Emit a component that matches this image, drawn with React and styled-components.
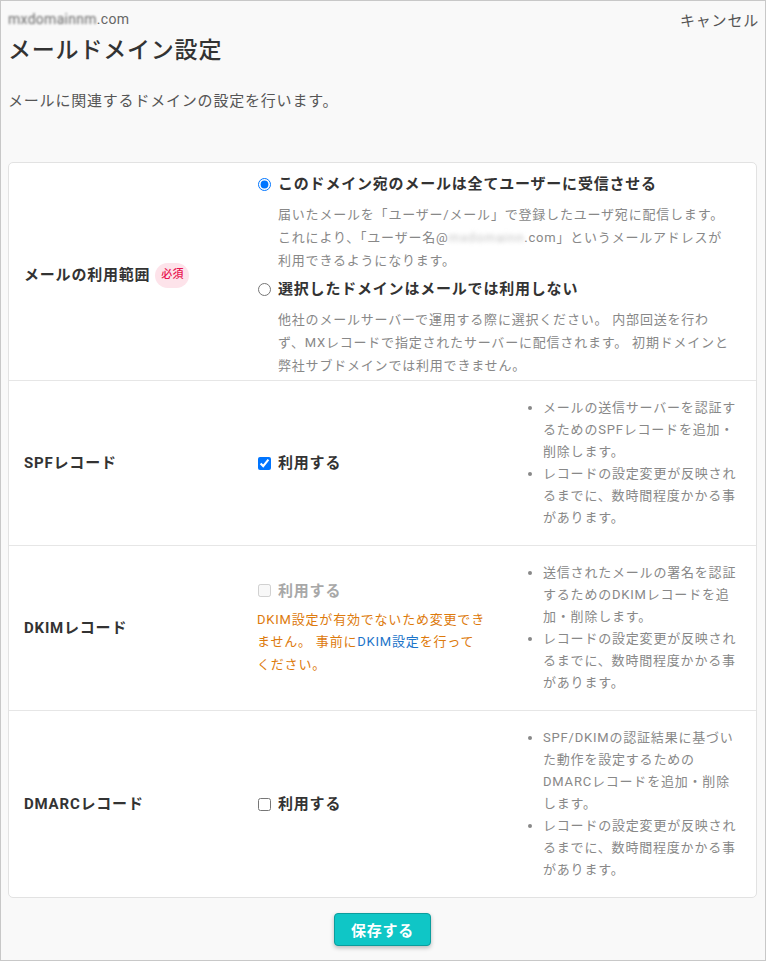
import React from "react"
import styled, { createGlobalStyle } from "styled-components"

const GlobalStyle = createGlobalStyle`
  html, body {
    margin: 0;
    padding: 0;
  }
  body {
    font-family: Roboto, "Noto Sans CJK JP", sans-serif;
    letter-spacing: 0.05em;
    color: #333;
    background: #f9f9f9;
  }
`

const Frame = styled.div`
  height: 961px;
  box-sizing: border-box;
  border: 1px solid #c8c8c8;
  background: #f9f9f9;
  padding: 0 8px 0 7px;
  display: flex;
  flex-direction: column;
  overflow: hidden;
`

const TopBar = styled.div`
  display: flex;
  justify-content: space-between;
  align-items: center;
  height: 20px;
  margin-top: 8px;
`

const Domain = styled.div`
  font-size: 14px;
  color: #666;
  letter-spacing: 0.02em;
`

const Masked = styled.span`
  filter: blur(${(p) => p.$blur || 1.3}px);
  color: ${(p) => p.$color || "#666"};
`

const Cancel = styled.button`
  all: unset;
  font-size: 15px;
  color: #555;
  margin-right: -2px;
  cursor: pointer;
`

const Title = styled.h1`
  margin: 6px 0 0;
  font-size: 23px;
  font-weight: 500;
  line-height: 32px;
  color: #333;
`

const Lead = styled.p`
  margin: 23px 0 0;
  font-size: 15px;
  line-height: 22px;
  color: #555;
`

const Card = styled.div`
  margin-top: 50px;
  background: #fff;
  border: 1px solid #e2e2e2;
  border-radius: 5px;
`

const Row = styled.div`
  display: grid;
  grid-template-columns: 203px 240px 214px;
  column-gap: 30px;
  align-items: center;
  padding: ${(p) => p.$pad || "16px 15px"};
  & + & {
    border-top: 1px solid #e6e6e6;
  }
`

const Label = styled.div`
  font-size: 15px;
  font-weight: 700;
  line-height: 22px;
  color: #333;
  display: flex;
  align-items: center;
  gap: 5px;
`

const Required = styled.span`
  display: inline-flex;
  align-items: center;
  justify-content: center;
  width: 34px;
  height: 25px;
  border-radius: 13px;
  background: #fde3ea;
  color: #e8134f;
  font-size: 11px;
  font-weight: 500;
  letter-spacing: 0.02em;
`

const Control = styled.div`
  grid-column: ${(p) => (p.$wide ? "2 / 4" : "auto")};
`

const Option = styled.div`
  & + & {
    margin-top: 6px;
  }
`

const Choice = styled.label`
  display: flex;
  align-items: center;
  font-size: 15px;
  font-weight: 700;
  line-height: 22px;
  color: ${(p) => (p.$disabled ? "#a8a8a8" : "#333")};
  input {
    margin: 0 7px 0 1px;
    width: 13px;
    height: 13px;
  }
`

const OptionNote = styled.p`
  margin: 8px 0 0;
  padding: 0 8px 0 21px;
  font-size: 13px;
  line-height: 23px;
  color: #888;
`

const Warning = styled.p`
  margin: 7px 0 0;
  padding-right: 10px;
  font-size: 13px;
  line-height: 22.5px;
  color: #dd7a0c;
  a {
    color: #1b74c9;
    text-decoration: none;
  }
`

const Hints = styled.ul`
  margin: 0;
  padding-left: 16px;
  font-size: 13px;
  line-height: 22px;
  color: #888;
  li::marker {
    color: #888;
  }
`

const Footer = styled.div`
  display: flex;
  justify-content: center;
  margin-top: 15px;
`

const SaveButton = styled.button`
  width: 97px;
  height: 33px;
  border: 1px solid #0b9d9d;
  border-radius: 4px;
  background: #0fc6c6;
  color: #fff;
  font-family: Roboto, "Noto Sans CJK JP", sans-serif;
  font-size: 15px;
  font-weight: 700;
  letter-spacing: 0.05em;
  box-shadow: 0 2px 4px rgba(0, 0, 0, 0.25);
  cursor: pointer;
`

const delayHint = "レコードの設定変更が反映されるまでに、数時間程度かかる事があります。"

export default function App() {
  return (
    <>
      <GlobalStyle />
      <Frame>
        <TopBar>
          <Domain>
            <Masked>mxdomainnm</Masked>.com
          </Domain>
          <Cancel>キャンセル</Cancel>
        </TopBar>
        <Title>メールドメイン設定</Title>
        <Lead>メールに関連するドメインの設定を行います。</Lead>

        <Card>
          <Row $pad="10px 15px 3px">
            <Label>
              メールの利用範囲<Required>必須</Required>
            </Label>
            <Control $wide>
              <Option>
                <Choice>
                  <input type="radio" name="scope" defaultChecked />
                  このドメイン宛のメールは全てユーザーに受信させる
                </Choice>
                <OptionNote>
                  届いたメールを「ユーザー/メール」で登録したユーザ宛に配信します。
                  これにより、「ユーザー名@
                  <Masked $blur={2.2} $color="#c4c4c4">
                    mxdomainn
                  </Masked>
                  .com」というメールアドレスが利用できるようになります。
                </OptionNote>
              </Option>
              <Option>
                <Choice>
                  <input type="radio" name="scope" />
                  選択したドメインはメールでは利用しない
                </Choice>
                <OptionNote>
                  他社のメールサーバーで運用する際に選択ください。
                  内部回送を行わず、MXレコードで指定されたサーバーに配信されます。
                  初期ドメインと弊社サブドメインでは利用できません。
                </OptionNote>
              </Option>
            </Control>
          </Row>

          <Row>
            <Label>SPFレコード</Label>
            <Control>
              <Choice>
                <input type="checkbox" defaultChecked />
                利用する
              </Choice>
            </Control>
            <Hints>
              <li>メールの送信サーバーを認証するためのSPFレコードを追加・削除します。</li>
              <li>{delayHint}</li>
            </Hints>
          </Row>

          <Row>
            <Label>DKIMレコード</Label>
            <Control>
              <Choice $disabled>
                <input type="checkbox" disabled />
                利用する
              </Choice>
              <Warning>
                DKIM設定が有効でないため変更できません。 事前に
                <a href="#dkim">DKIM設定</a>を行ってください。
              </Warning>
            </Control>
            <Hints>
              <li>送信されたメールの署名を認証するためのDKIMレコードを追加・削除します。</li>
              <li>{delayHint}</li>
            </Hints>
          </Row>

          <Row>
            <Label>DMARCレコード</Label>
            <Control>
              <Choice>
                <input type="checkbox" />
                利用する
              </Choice>
            </Control>
            <Hints>
              <li>SPF/DKIMの認証結果に基づいた動作を設定するためのDMARCレコードを追加・削除します。</li>
              <li>{delayHint}</li>
            </Hints>
          </Row>
        </Card>

        <Footer>
          <SaveButton>保存する</SaveButton>
        </Footer>
      </Frame>
    </>
  )
}
